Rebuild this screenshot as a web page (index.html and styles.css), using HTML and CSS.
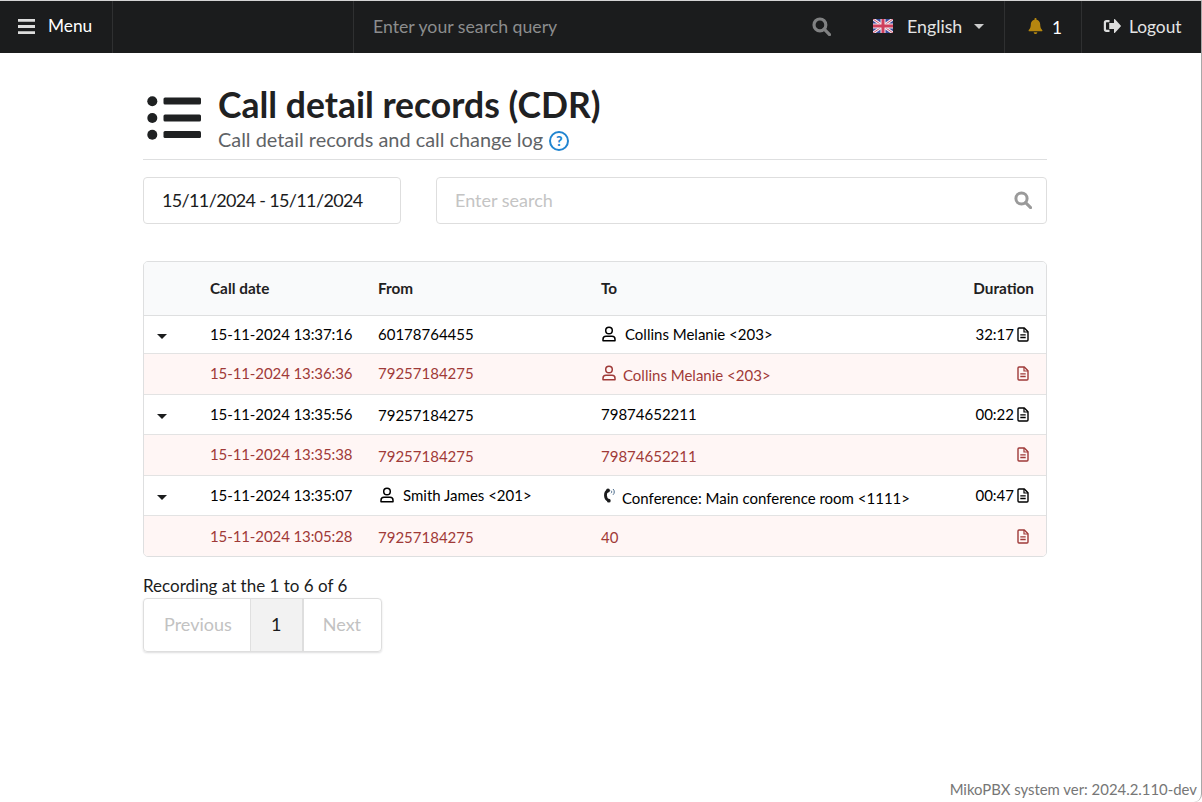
FILE: index.html
```html
<!DOCTYPE html>
<html>
<head>
	<title>Call detail records (CDR)</title>

	<link rel="stylesheet" href="styles.css">
</head>
<body>

	<div class="topbar">
		<a class="top-item menu-item">
			<svg class="ico-bars" viewBox="0 0 16 14"><path d="M0 0h16v2.6H0zM0 5.700h16v2.600H0zM0 11.400h16V14H0z"/></svg>
			Menu
		</a>
		<div class="top-spacer"></div>
		<div class="top-search">
			<span class="top-search-text">Enter your search query</span>
			<svg class="ico-search" viewBox="0 0 18 18"><circle cx="7.500" cy="7.500" r="5.600"/><path d="M11.600 11.600l5 5"/></svg>
		</div>
		<a class="top-item lang-item">
			<svg class="flag" width="20" height="14" viewBox="0 0 20 14">
				<rect width="20" height="14" fill="#3b4a9c"/>
				<path d="M0 0l20 14M20 0L0 14" stroke="#f3e9ee" stroke-width="3"/>
				<path d="M0 0l20 14M20 0L0 14" stroke="#d0526c" stroke-width="1"/>
				<path d="M10 0v14M0 7h20" stroke="#f3e9ee" stroke-width="5"/>
				<path d="M10 0v14M0 7h20" stroke="#cf3f5c" stroke-width="3"/>
			</svg>
			<span class="lang-name">English</span>
			<span class="caret caret-light"></span>
		</a>
		<a class="top-item bell-item">
			<svg class="ico-bell" viewBox="0 0 14 16"><path d="M7 0c-.6 0-1 .4-1 1v.7C3.700 2.200 2.300 4 2.300 6.300c0 3.700-1.300 4.800-2 5.600-.5.600-.1 1.400.6 1.400h12.200c.7 0 1.100-.8.600-1.400-.7-.8-2-1.900-2-5.600C11.700 4 10.300 2.200 8 1.700V1c0-.6-.4-1-1-1zM5.200 14.200C5.200 15.200 6 16 7 16s1.800-.8 1.800-1.800z"/></svg>
			1
		</a>
		<a class="top-item logout-item">
			<svg class="ico-logout" viewBox="0 0 18 14"><path d="M6.500 1H3.300C1.800 1 .8 2 .8 3.500v7C.8 12 1.800 13 3.300 13h3.200v-2.200H3.500c-.3 0-.5-.2-.5-.5v-6.600c0-.3.200-.5.500-.5h3zM11 .6v3.500H6.200v5.800H11v3.500c0 .5.600.8 1 .4l5.700-6.300c.3-.3.300-.7 0-1L12 .2c-.4-.4-1-.1-1 .4z"/></svg>
			Logout
		</a>
	</div>

	<div class="page">

		<div class="page-head">
			<svg class="ico-list" viewBox="0 0 54 44">
				<circle cx="5.300" cy="5.300" r="5"/>
				<circle cx="5.300" cy="22" r="5"/>
				<circle cx="5.300" cy="38.700" r="5"/>
				<rect x="16.500" y="1.500" width="37.500" height="7" rx="1.500"/>
				<rect x="16.500" y="18.500" width="37.500" height="7" rx="1.500"/>
				<rect x="16.500" y="35" width="37.500" height="7" rx="1.500"/>
			</svg>
			<div>
				<h1>Call detail records (CDR)</h1>
				<p class="sub">Call detail records and call change log
					<span class="help">?</span>
				</p>
			</div>
		</div>

		<div class="filters">
			<div class="field date-field"><span class="date-text">15/11/2024 - 15/11/2024</span></div>
			<div class="field search-field">
				<span class="placeholder">Enter search</span>
				<svg class="ico-search ico-search-sm" viewBox="0 0 18 18"><circle cx="7.500" cy="7.500" r="5.600"/><path d="M11.600 11.600l5 5"/></svg>
			</div>
		</div>

		<div class="table-wrap">
			<table class="cdr">
				<colgroup>
					<col class="c-caret"><col class="c-date"><col class="c-from"><col class="c-to"><col class="c-dur">
				</colgroup>
				<thead>
					<tr><th></th><th>Call date</th><th>From</th><th>To</th><th class="right">Duration</th></tr>
				</thead>
				<tbody>
					<tr class="row-first">
						<td><span class="caret"></span></td>
						<td>15-11-2024 13:37:16</td>
						<td>60178764455</td>
						<td class="cell-icon"><svg class="ico-user gap-wide"><use href="#user"/></svg>Collins Melanie &lt;203&gt;</td>
						<td class="right">32:17<svg class="ico-file"><use href="#file"/></svg></td>
					</tr>
					<tr class="missed">
						<td></td>
						<td class="up1">15-11-2024 13:36:36</td>
						<td class="up1">79257184275</td>
						<td class="cell-icon dn1"><svg class="ico-user"><use href="#user"/></svg>Collins Melanie &lt;203&gt;</td>
						<td class="right up1"><svg class="ico-file"><use href="#file"/></svg></td>
					</tr>
					<tr>
						<td><span class="caret"></span></td>
						<td>15-11-2024 13:35:56</td>
						<td class="dn1">79257184275</td>
						<td>79874652211</td>
						<td class="right">00:22<svg class="ico-file"><use href="#file"/></svg></td>
					</tr>
					<tr class="missed">
						<td></td>
						<td class="up1">15-11-2024 13:35:38</td>
						<td class="dn1">79257184275</td>
						<td class="dn1">79874652211</td>
						<td class="right up1"><svg class="ico-file"><use href="#file"/></svg></td>
					</tr>
					<tr>
						<td><span class="caret"></span></td>
						<td>15-11-2024 13:35:07</td>
						<td class="cell-from-user"><svg class="ico-user gap-mid"><use href="#user"/></svg>Smith James &lt;201&gt;</td>
						<td class="dn2"><svg class="ico-phone" viewBox="0 0 13 15"><path class="handset" d="M4.800 2.800C1.600 4.300 1.600 10.300 5.300 12.400"/><circle cx="5" cy="2.500" r="1.900"/><circle cx="5.800" cy="12.700" r="1.900"/><path class="wave" d="M8 2.600c.9.600.9 2 0 2.600M10 1c1.700 1.300 1.700 4.500 0 5.800"/></svg>Conference: Main conference room &lt;1111&gt;</td>
						<td class="right">00:47<svg class="ico-file"><use href="#file"/></svg></td>
					</tr>
					<tr class="missed">
						<td></td>
						<td>15-11-2024 13:05:28</td>
						<td class="dn1">79257184275</td>
						<td class="dn1">40</td>
						<td class="right"><svg class="ico-file"><use href="#file"/></svg></td>
					</tr>
				</tbody>
			</table>
		</div>

		<div class="rec-info">Recording at the 1 to 6 of 6</div>
		<div class="pager">
			<span class="pg pg-off pg-prev">Previous</span>
			<span class="pg pg-on">1</span>
			<span class="pg pg-off pg-next">Next</span>
		</div>
	</div>

	<div class="version">MikoPBX system ver: 2024.2.110-dev</div>

	<!-- shared icons -->
	<svg class="defs" width="0" height="0">
		<symbol id="user" viewBox="0 0 14 16">
			<circle cx="7" cy="4.500" r="3.300" fill="none" stroke="currentColor" stroke-width="1.500"/>
			<path d="M1 14.800v-1.600c0-1.900 1.300-3 3-3h6c1.700 0 3 1.100 3 3v1.600z" fill="none" stroke="currentColor" stroke-width="1.500" stroke-linejoin="round"/>
		</symbol>
		<symbol id="file" viewBox="0 0 12 15">
			<path d="M1 2c0-.6.400-1 1-1h5.300L11 4.700V13c0 .6-.4 1-1 1H2c-.6 0-1-.4-1-1z" fill="none" stroke="currentColor" stroke-width="1.400" stroke-linejoin="round"/>
			<path d="M7 1v4h4" fill="none" stroke="currentColor" stroke-width="1.200"/>
			<path d="M3.300 7.800h5.400M3.300 10.500h5.400" stroke="currentColor" stroke-width="1.300"/>
		</symbol>
	</svg>

</body>
</html>
```

FILE: styles.css
```css
* {
	box-sizing: border-box;
}
html, body {
	height: 100%;
}
body {
	margin: 0;
	background: #fff;
	color: #000;
	font-family: Lato, "Noto Sans", sans-serif;
	font-size: 14px;
	display: flex;
	flex-direction: column;
	/* thin window frame seen in the screenshot */
	border-top: 1px solid #d4d4d4;
	border-right: 1px solid #a8a8a8;
	border-radius: 0 0 8px 8px;
}

/* top menu */
.topbar {
	display: flex;
	align-items: stretch;
	height: 52px;
	background: #1b1c1d;
	color: #fff;
	font-size: 17.300px;
	flex: none;
}
.top-item {
	display: flex;
	align-items: center;
	padding-bottom: 2px;
	border-right: 1px solid #2f3031;
}
.menu-item {
	width: 113px;
	padding: 0 0 4px 18px;
}
.ico-bars {
	width: 17px;
	height: 15px;
	margin: 2px 13px 0 0;
	fill: #ddd;
}
.top-spacer {
	width: 241px;
	border-right: 1px solid #2f3031;
}
.top-search {
	flex: 1;
	display: flex;
	align-items: center;
	justify-content: space-between;
	padding: 0 41px 2px 19px;
	font-size: 17.700px;
	color: #8c8d8e;
}
.ico-search {
	width: 19px;
	height: 19px;
	fill: none;
	stroke: #808182;
	stroke-width: 3;
	stroke-linecap: round;
}
.ico-search-sm {
	width: 18px;
	height: 18px;
	stroke: #9a9a9a;
}
.lang-item {
	width: 133px;
	padding-left: 1px;
	color: #e4e4e4;
}
.flag {
	margin-right: 14px;
}
.lang-name {
	margin-right: 12px;
	font-size: 17.800px;
}
.caret {
	display: inline-block;
	width: 0;
	height: 0;
	border-left: 5px solid transparent;
	border-right: 5px solid transparent;
	border-top: 5px solid #1b1c1d;
	vertical-align: middle;
}
.caret-light {
	border-top-color: #ccc;
}
.bell-item {
	width: 77px;
	padding: 0 0 0 23px;
}
.ico-bell {
	width: 15px;
	height: 16px;
	margin: 0 9px 2px 0;
	fill: #b5860f;
}
.logout-item {
	width: 119px;
	padding-left: 21px;
	border-right: 0;
	color: #e4e4e4;
}
.ico-logout {
	width: 18px;
	height: 14px;
	margin-right: 8px;
	fill: #ddd;
}

/* page */
.page {
	flex: 1;
	width: 904px;
	margin-left: 143px;
}
.page-head {
	display: flex;
	height: 107px;
	padding-top: 32px;
	border-bottom: 1px solid #dedfe0;
}
.ico-list {
	width: 54px;
	height: 44px;
	margin: 11px 17px 0 4px;
	fill: #1f2122;
}
h1 {
	margin: 0;
	font-size: 35.500px;
	line-height: 40px;
	font-weight: 700;
	color: #1f2122;
}
.sub {
	margin: 0;
	font-size: 19.900px;
	line-height: 28px;
	color: #5f6366;
}
.help {
	display: inline-block;
	width: 20px;
	height: 20px;
	margin-left: 1px;
	border: 2px solid #2185d0;
	border-radius: 50%;
	color: #2185d0;
	font-size: 14px;
	font-weight: 900;
	line-height: 16px;
	text-align: center;
	vertical-align: 1px;
}
.filters {
	display: flex;
	gap: 35px;
	margin-top: 17px;
}
.field {
	height: 47px;
	display: flex;
	align-items: center;
	padding: 0 18px 2px;
	border: 1px solid #dedede;
	border-radius: 4px;
	font-size: 18px;
	color: #1b1c1d;
}
.date-field {
	width: 258px;
}
.date-text {
	letter-spacing: -.65px;
}
.search-field {
	flex: 1;
	justify-content: space-between;
	padding-right: 14px;
}
.placeholder {
	color: #c4c4c4;
}

/* table */
.table-wrap {
	margin-top: 37px;
	border: 1px solid #dedfe0;
	border-radius: 5px;
	overflow: hidden;
}
.cdr {
	width: 100%;
	border-collapse: collapse;
	table-layout: fixed;
	font-size: 15px;
}
.c-caret { width: 66px; }
.c-date { width: 168px; }
.c-from { width: 223px; }
.c-dur { width: 120px; }
.cdr th {
	height: 53px;
	padding: 0;
	background: #f9fafb;
	border-bottom: 1px solid #dedfe0;
	color: #1f2122;
	font-size: 15.300px;
	font-weight: 700;
	text-align: left;
}
.cdr th.right {
	padding-right: 12px;
	text-align: right;
}
.cdr td {
	height: 40px;
	padding: 0;
	border-top: 1px solid #e3e3e3;
	white-space: nowrap;
}
.cdr td:nth-child(2) {
	letter-spacing: -.1px;
}
.cdr tbody tr:first-child td {
	border-top: 0;
}
.cdr .row-first td {
	height: 38px;
}
.cdr .missed td {
	height: 41px;
}
.cdr td:first-child {
	padding-left: 13px;
}
.right {
	text-align: right;
}
.cdr td.right {
	padding-right: 17px;
}
.cdr td.cell-icon {
	padding-left: 1px;
}
.cdr td.cell-from-user {
	padding-left: 2px;
}
/* the reference cells sit a pixel or two off the row centre */
.cdr td.up1 {
	padding-bottom: 2px;
}
.cdr td.dn1 {
	padding-top: 2px;
}
.cdr td.dn2 {
	padding-top: 4px;
}
.missed td {
	background: #fff6f5;
	color: #9f3a38;
}
.ico-user {
	width: 14px;
	height: 16px;
	margin-right: 7px;
	vertical-align: -2px;
}
.dn1 .ico-user {
	vertical-align: 0;
}
.gap-wide {
	margin-right: 9px;
}
.gap-mid {
	margin-right: 9px;
}
.ico-phone {
	width: 13px;
	height: 15px;
	margin-right: 6px;
	margin-left: 2px;
	vertical-align: 1px;
	fill: #1b1c1d;
}
.handset {
	fill: none;
	stroke: #1b1c1d;
	stroke-width: 2.800;
}
.wave {
	fill: none;
	stroke: #4a6a8a;
	stroke-width: 1;
}
.ico-file {
	width: 12px;
	height: 15px;
	margin-left: 3px;
	vertical-align: -2px;
}

/* pagination */
.rec-info {
	margin-top: 19px;
	font-size: 17px;
	line-height: 20px;
	color: #1b1c1d;
}
.pager {
	display: inline-flex;
	height: 54px;
	margin-top: 2px;
	border: 1px solid #dedede;
	border-radius: 4px;
	box-shadow: 0 1px 2px rgba(34, 36, 38, .15);
	font-size: 18px;
}
.pg {
	display: flex;
	align-items: center;
	padding: 0 20px 2px;
}
.pg-prev {
	padding-right: 18px;
}
.pg-next {
	padding-left: 19px;
}
.pg-off {
	color: #c2c2c2;
}
.pg-on {
	width: 54px;
	justify-content: center;
	background: #f2f2f2;
	border-left: 1px solid #e0e0e0;
	border-right: 2px solid #dedede;
	color: #1b1c1d;
}

.version {
	flex: none;
	padding: 0 4px 4px 0;
	text-align: right;
	font-size: 14.900px;
	line-height: 17px;
	color: #767676;
}
.defs {
	position: absolute;
}
```
